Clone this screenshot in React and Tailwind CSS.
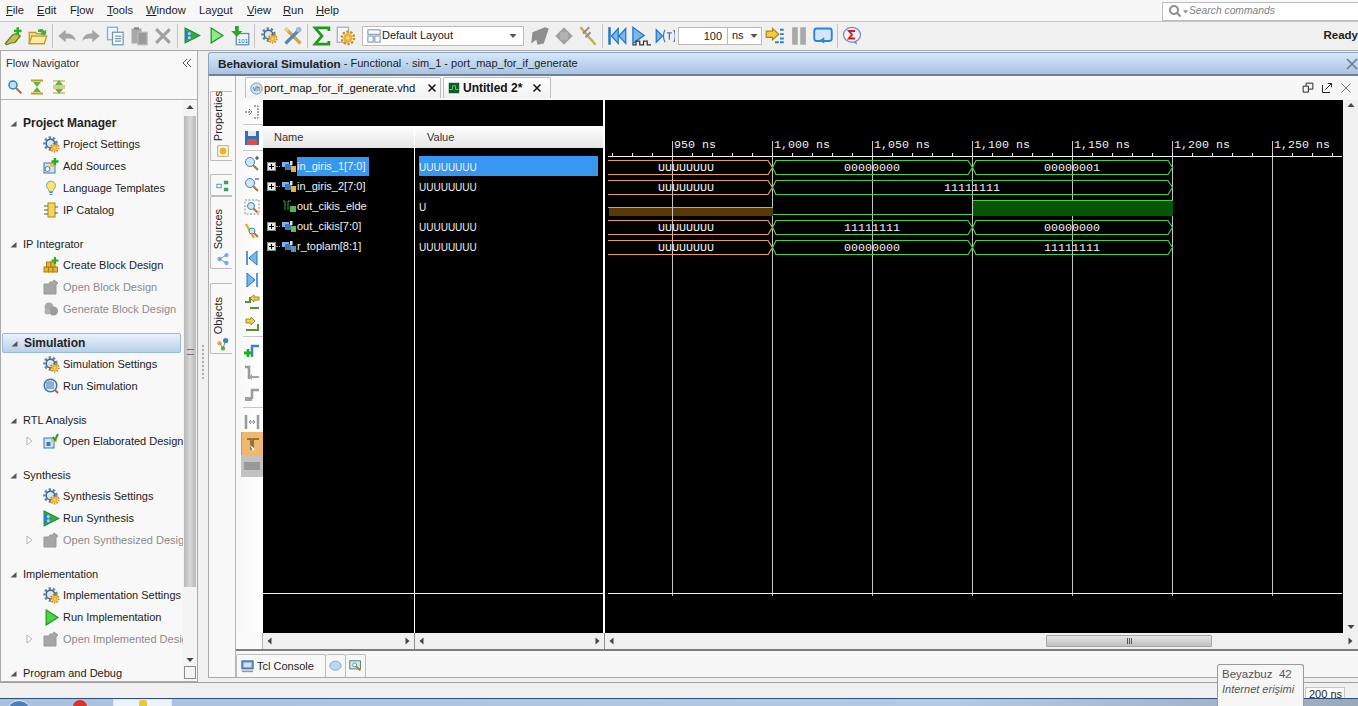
import React from 'react';

// --- icons -----------------------------------------------------------------
const Ic = ({ children, s = 16, className = '' }) => (
  <svg width={s} height={s} viewBox="0 0 16 16" className={`shrink-0 ${className}`}>{children}</svg>
);

const Gear = () => (
  <Ic s={17}>
    <circle cx="7" cy="7" r="5.6" fill="none" stroke="#5b86ad" strokeWidth="2.4" strokeDasharray="2.2 1.8" />
    <circle cx="7" cy="7" r="4" fill="#dbe6f0" stroke="#41688c" strokeWidth="1.4" />
    <circle cx="11" cy="11" r="3.8" fill="none" stroke="#c98a12" strokeWidth="1.6" strokeDasharray="1.5 1.1" />
    <circle cx="11" cy="11" r="2.9" fill="#f3b12d" />
    <circle cx="11" cy="11" r="1" fill="#fbe7a8" />
  </Ic>
);
const AddSources = () => (
  <Ic>
    <rect x="1" y="5" width="11" height="10" fill="#cfe3f5" stroke="#3c7ab0" />
    <circle cx="4.5" cy="11" r="2.5" fill="#fff" stroke="#3c7ab0" />
    <rect x="7" y="6" width="4" height="3" fill="#f0c040" />
    <path d="M12 0v7M8.5 3.5h7" stroke="#22b022" strokeWidth="2.4" />
  </Ic>
);
const Bulb = () => (
  <Ic>
    <path d="M8 1a4.6 4.6 0 0 0-3 8c.8.8 1 1.5 1 2.5h4c0-1 .2-1.7 1-2.5a4.6 4.6 0 0 0-3-8z" fill="#fbe56a" stroke="#6fa8d8" />
    <path d="M6.2 12.5h3.6M6.6 14.3h2.8" stroke="#5b8fc0" strokeWidth="1.2" />
  </Ic>
);
const Chip = () => (
  <Ic>
    <rect x="5" y="1" width="7" height="14" fill="#f5d65a" stroke="#a98a18" />
    <path d="M1 4h4M1 8h4M1 12h4M12 5h3M12 11h3" stroke="#55595e" />
  </Ic>
);
const Blocks = () => (
  <Ic>
    <rect x="1" y="10" width="4.5" height="5" fill="#e6b52e" stroke="#a87f12" />
    <rect x="5.5" y="10" width="4.5" height="5" fill="#e6b52e" stroke="#a87f12" />
    <rect x="10" y="10" width="4.5" height="5" fill="#e6b52e" stroke="#a87f12" />
    <rect x="3.5" y="5" width="4.5" height="5" fill="#e6b52e" stroke="#a87f12" />
    <rect x="8" y="5" width="4" height="5" fill="#e6b52e" stroke="#a87f12" />
    <path d="M12 0v7M8.5 3.5h7" stroke="#22b022" strokeWidth="2.2" />
  </Ic>
);
const OpenGray = () => (
  <Ic>
    <path d="M1 5h5l1-2h3l1-2 4 3-2 2v9H1z" fill="#a6a6a6" stroke="#989898" />
  </Ic>
);
const GenGray = () => (
  <Ic>
    <circle cx="6" cy="6" r="4.5" fill="#a8a8a8" />
    <circle cx="10.5" cy="10" r="4.5" fill="#9c9c9c" />
    <circle cx="4.5" cy="10.5" r="3" fill="#b0b0b0" />
  </Ic>
);
const RunSim = () => (
  <Ic>
    <circle cx="7.5" cy="7.5" r="6.3" fill="#dce8f4" stroke="#3f76ad" strokeWidth="1.5" />
    <path d="M4 4v7M6 3v8M8 3v8M10 4v7" stroke="#3f76ad" />
    <path d="M12 12l3 3" stroke="#c85a30" strokeWidth="2" />
  </Ic>
);
const Elaborated = () => (
  <Ic>
    <rect x="1" y="5" width="10" height="10" fill="#cfe3f5" stroke="#3c7ab0" />
    <rect x="3.5" y="9" width="4" height="4" fill="#3c7ab0" />
    <path d="M8 6h6v3H8z" fill="#f0c040" />
    <path d="M10 4l2 3 3-6" fill="none" stroke="#22a022" strokeWidth="2" />
  </Ic>
);
const RunSynth = () => (
  <Ic s={17}>
    <path d="M1 1l14 7-14 7z" fill="#35ad35" stroke="#1d8a3d" />
    <path d="M1 3l7 5-7 5z" fill="#2c7cc8" />
    <circle cx="5" cy="6.3" r="1.5" fill="#9fd0f5" />
    <circle cx="5" cy="10" r="1.5" fill="#9fd0f5" />
  </Ic>
);
const Play = ({ solid }) => (
  <Ic s={17}>
    <path d="M3 1l11 7-11 7z" fill={solid ? '#49d449' : '#8ee88e'} stroke="#1c9c1c" strokeWidth="1.2" />
  </Ic>
);
const Triangle = ({ open }) =>
  open ? (
    <svg width="8" height="10" viewBox="0 0 8 10" className="shrink-0">
      <path d="M1 1l5 4-5 4z" fill="#fff" stroke="#b5b5b5" />
    </svg>
  ) : (
    <svg width="7" height="7" viewBox="0 0 7 7" className="shrink-0">
      <path d="M6.5 1v5.5H0.5z" fill="#555" />
    </svg>
  );
const Arrow = ({ dir = 'down', color = '#444' }) => {
  const d = {
    up: 'M0.5 5L4 1l3.5 4z',
    down: 'M0.5 2L4 6l3.5-4z',
    left: 'M5.5 0.5L1.5 4l4 3.5z',
    right: 'M2.5 0.5L6.5 4l-4 3.5z',
  }[dir];
  return (
    <svg width="8" height="8" viewBox="0 0 8 8" className="shrink-0">
      <path d={d} fill={color} />
    </svg>
  );
};

// toolbar icons
const TB = {
  wand: (
    <Ic s={20}>
      <path d="M1 14l6-7c2-1 4-1 6 1l-4 5c-3 0-5 1-7 2z" fill="#b9c24a" stroke="#6f7a22" />
      <path d="M11 1v6M8 4h6" stroke="#22b022" strokeWidth="2" />
    </Ic>
  ),
  folder: (
    <Ic s={20}>
      <path d="M1 5h5l1 1h6v8H1z" fill="#f2d675" stroke="#b99a2c" />
      <path d="M1 14l2-6h12l-2 6z" fill="#fbe9a6" stroke="#b99a2c" />
      <path d="M8 3c2-1 4-1 5 1l1.5-1v4H10l1.5-1c-.8-1.3-2-1.6-3.5-1z" fill="#3fb03f" />
    </Ic>
  ),
  undo: (
    <Ic s={20}>
      <path d="M1 8l6-5v3c4 0 7 1 8 6-2-2-4-2-8-2v3z" fill="#a4a4a4" />
    </Ic>
  ),
  redo: (
    <Ic s={20}>
      <path d="M15 8l-6-5v3c-4 0-7 1-8 6 2-2 4-2 8-2v3z" fill="#a4a4a4" />
    </Ic>
  ),
  copy: (
    <Ic s={20}>
      <rect x="2" y="1" width="8" height="10" fill="#eef4fb" stroke="#8aa9c8" />
      <rect x="6" y="5" width="8.5" height="10" fill="#fff" stroke="#6f94bb" />
      <path d="M8 8h5M8 10h5M8 12h5" stroke="#6f94bb" />
    </Ic>
  ),
  paste: (
    <Ic s={20}>
      <rect x="2" y="2" width="8" height="12" fill="#a9a9a9" />
      <rect x="7" y="5" width="7.5" height="10" fill="#9a9a9a" stroke="#b8b8b8" />
      <rect x="4" y="1" width="4" height="2" fill="#888" />
    </Ic>
  ),
  x: (
    <Ic s={20}>
      <path d="M2.5 2.5l11 11M13.5 2.5l-11 11" stroke="#a0a0a0" strokeWidth="2.4" />
    </Ic>
  ),
  download: (
    <Ic s={20}>
      <rect x="5" y="6" width="10" height="9" fill="#eef4fb" stroke="#5c8cb8" />
      <path d="M4 0v4H1l4.5 4.5L10 4H7V0z" fill="#2ea52e" />
      <text x="6.2" y="13.5" fontSize="5" fill="#2a6aa8" fontFamily="'Liberation Sans',sans-serif">101</text>
    </Ic>
  ),
  tools: (
    <Ic s={20}>
      <path d="M2 2l12 12" stroke="#d9a43a" strokeWidth="2.6" />
      <path d="M14 2L2 14" stroke="#5a86b3" strokeWidth="2.6" />
      <circle cx="12.5" cy="3" r="2.2" fill="#9dbbd8" />
      <circle cx="3" cy="3" r="1.6" fill="#e6d27a" />
    </Ic>
  ),
  sigma: (
    <Ic s={20}>
      <path d="M13.5 4V1.5H2.5L8 8l-5.500 6.500h11V12" fill="none" stroke="#1f9c1f" strokeWidth="2.2" />
    </Ic>
  ),
  docGear: (
    <Ic s={20}>
      <rect x="1" y="1" width="9" height="12" fill="#f4f6f9" stroke="#9bb0c6" />
      <circle cx="9.5" cy="9.5" r="5" fill="none" stroke="#c98a12" strokeWidth="1.8" strokeDasharray="1.8 1.3" />
      <circle cx="9.5" cy="9.5" r="3.8" fill="#f3b12d" />
      <circle cx="9.5" cy="9.5" r="1.3" fill="#fbe7a8" />
    </Ic>
  ),
  grayLeaf: (
    <Ic s={20}>
      <path d="M2 5l10-4 3 1-4 12-5 1-1-4-4 3z" fill="#8f8f8f" />
    </Ic>
  ),
  grayDiamond: (
    <Ic s={20}>
      <path d="M8 1l7 7-7 7-7-7z" fill="#a2a2a2" />
      <path d="M5 5h6v6H5z" fill="#b4b4b4" />
    </Ic>
  ),
  pen: (
    <Ic s={20}>
      <path d="M2 1l12 14" stroke="#c5ac5a" strokeWidth="2" />
      <path d="M4 6l5-5M6 9l4-4" stroke="#8d8d8d" strokeWidth="1.5" />
    </Ic>
  ),
  rewind: (
    <Ic s={20}>
      <path d="M2 1v14" stroke="#2376cc" strokeWidth="2" />
      <path d="M9 2L3.500 8 9 14zM15 2L9.500 8l5.500 6z" fill="#7cb6ec" stroke="#2376cc" />
    </Ic>
  ),
  playPulse: (
    <Ic s={20}>
      <path d="M1.5 1l9 6.5-9 6.500z" fill="#7cb6ec" stroke="#2376cc" />
      <path d="M1 15h3v-3h3v3h3v-3h3v3h3" fill="none" stroke="#333" />
    </Ic>
  ),
  playT: (
    <Ic s={20}>
      <path d="M1 3l5 5-5 5z" fill="#7cb6ec" stroke="#2376cc" />
      <path d="M8 3c-1.5 3-1.5 7 0 10M15 3c1.5 3 1.500 7 0 10M9.500 5.500h4M11.500 5.500v5.500" fill="none" stroke="#4d7ca8" />
    </Ic>
  ),
  yellowArrow: (
    <Ic s={20}>
      <path d="M1 4h5V2l5 4.500L6 11V9H1z" fill="#f4cc3a" stroke="#a98a18" />
      <path d="M12 3h3M12 6.500h3M12 10h3M12 13h3M8 13h3" stroke="#2f7fd0" strokeWidth="1.5" />
    </Ic>
  ),
  pause: (
    <Ic s={20}>
      <rect x="2.5" y="1" width="4.5" height="14" fill="#a8a8a8" />
      <rect x="9" y="1" width="4.5" height="14" fill="#a8a8a8" />
    </Ic>
  ),
  relaunch: (
    <Ic s={20}>
      <rect x="1" y="2" width="14" height="10" rx="2" fill="#cfe6fb" stroke="#2c84d8" strokeWidth="1.5" />
      <path d="M9 9v5l-4-2.500z" fill="#2c84d8" />
    </Ic>
  ),
  redSigma: (
    <Ic s={20}>
      <ellipse cx="8" cy="7" rx="6.800" ry="6" fill="#f6f2f4" stroke="#7f8fb8" />
      <path d="M10.500 4H5.500L8 7l-2.500 3h5" fill="none" stroke="#c81e28" strokeWidth="1.5" />
      <path d="M9 13l3 2-.5-3z" fill="#7f8fb8" />
    </Ic>
  ),
  layout: (
    <Ic s={14}>
      <rect x="1" y="1" width="14" height="5" fill="#fff" stroke="#5c7ea6" />
      <rect x="1" y="8" width="6" height="7" fill="#fff" stroke="#5c7ea6" />
      <rect x="9" y="8" width="6" height="7" fill="#fff" stroke="#5c7ea6" />
    </Ic>
  ),
};

// --- small shared parts ----------------------------------------------------
const Slot = ({ children }) => <div className="w-[24px] h-[24px] flex items-center justify-center">{children}</div>;
const Sep = () => (
  <div className="w-[5px] h-[24px] flex justify-center">
    <div className="w-[1px] h-full bg-[#c4c4c4]" />
  </div>
);

const MENU = [
  ['', 'F', 'ile', 'w-[31px]'],
  ['', 'E', 'dit', 'w-[33px]'],
  ['F', 'l', 'ow', 'w-[37px]'],
  ['', 'T', 'ools', 'w-[39px]'],
  ['', 'W', 'indow', 'w-[53px]'],
  ['Lay', 'o', 'ut', 'w-[48px]'],
  ['', 'V', 'iew', 'w-[36px]'],
  ['', 'R', 'un', 'w-[33px]'],
  ['', 'H', 'elp', 'w-[40px]'],
];

const MenuBar = () => (
  <div className="h-[22px] flex items-center bg-[#f7f7f7] border-b border-[#c6c6c6] pl-[6px]">
    {MENU.map(([a, u, b, w]) => (
      <div key={a + u} className={`${w} text-[11.2px] text-[#222]`}>
        {a}
        <span className="underline">{u}</span>
        {b}
      </div>
    ))}
    <div className="ml-auto h-[19px] w-[196px] mt-[1px] border border-[#bdbdbd] border-r-0 bg-white flex items-center pl-[5px] gap-[1px]">
      <svg width="14" height="14" viewBox="0 0 14 14">
        <circle cx="6" cy="6" r="4" fill="none" stroke="#8c8c8c" strokeWidth="2" />
        <path d="M9 9l3.500 3.500" stroke="#8c8c8c" strokeWidth="2" />
      </svg>
      <svg width="5" height="5" viewBox="0 0 8 8">
        <path d="M0 2h8L4 7z" fill="#8c8c8c" />
      </svg>
      <span className="text-[10.3px] italic text-[#7f7f7f]">Search commands</span>
    </div>
  </div>
);

const Toolbar = () => (
  <div className="h-[29px] flex items-center bg-[#f0f0f0] border-b border-[#a8a8a8] pl-[2px] pb-[1px]">
    <Slot>{TB.wand}</Slot>
    <Slot>{TB.folder}</Slot>
    <Sep />
    <Slot>{TB.undo}</Slot>
    <Slot>{TB.redo}</Slot>
    <Slot>{TB.copy}</Slot>
    <Slot>{TB.paste}</Slot>
    <Slot>{TB.x}</Slot>
    <Sep />
    <Slot><RunSynth /></Slot>
    <Slot><Play /></Slot>
    <Slot>{TB.download}</Slot>
    <Sep />
    <Slot><Gear /></Slot>
    <Slot>{TB.tools}</Slot>
    <Sep />
    <Slot>{TB.sigma}</Slot>
    <Slot>{TB.docGear}</Slot>
    <div className="ml-[4px] w-[162px] h-[20px] bg-white border border-[#bcbcbc] flex items-center pl-[4px] gap-[1px]">
      {TB.layout}
      <span className="text-[11px] text-[#222] flex-1">Default Layout</span>
      <div className="mr-[6px]"><Arrow color="#555" /></div>
    </div>
    <div className="w-[4px]" />
    <Slot>{TB.grayLeaf}</Slot>
    <Slot>{TB.grayDiamond}</Slot>
    <Slot>{TB.pen}</Slot>
    <Sep />
    <Slot>{TB.rewind}</Slot>
    <Slot>{TB.playPulse}</Slot>
    <Slot>{TB.playT}</Slot>
    <div className="ml-[1px] w-[50px] h-[18px] bg-white border border-[#bcbcbc] text-[11px] text-right pr-[5px] leading-[16px] text-[#222]">100</div>
    <div className="w-[34px] h-[18px] bg-white border border-l-0 border-[#bcbcbc] flex items-center justify-between pl-[4px] pr-[3px] text-[11px] text-[#222]">
      ns
      <Arrow color="#555" />
    </div>
    <div className="w-[1px]" />
    <Slot>{TB.yellowArrow}</Slot>
    <Slot>{TB.pause}</Slot>
    <Slot>{TB.relaunch}</Slot>
    <Sep />
    <Slot>{TB.redSigma}</Slot>
    <div className="ml-auto font-bold text-[11.5px] text-[#222]">Ready</div>
  </div>
);

// --- flow navigator --------------------------------------------------------
const NAV = [
  {
    title: 'Project Manager',
    bold: true,
    items: [
      { label: 'Project Settings', icon: <Gear /> },
      { label: 'Add Sources', icon: <AddSources /> },
      { label: 'Language Templates', icon: <Bulb /> },
      { label: 'IP Catalog', icon: <Chip /> },
    ],
  },
  {
    title: 'IP Integrator',
    items: [
      { label: 'Create Block Design', icon: <Blocks /> },
      { label: 'Open Block Design', icon: <OpenGray />, off: true },
      { label: 'Generate Block Design', icon: <GenGray />, off: true },
    ],
  },
  {
    title: 'Simulation',
    bold: true,
    active: true,
    items: [
      { label: 'Simulation Settings', icon: <Gear /> },
      { label: 'Run Simulation', icon: <RunSim /> },
    ],
  },
  {
    title: 'RTL Analysis',
    items: [{ label: 'Open Elaborated Design', icon: <Elaborated />, expand: true }],
  },
  {
    title: 'Synthesis',
    items: [
      { label: 'Synthesis Settings', icon: <Gear /> },
      { label: 'Run Synthesis', icon: <RunSynth /> },
      { label: 'Open Synthesized Design', icon: <OpenGray />, off: true, expand: true },
    ],
  },
  {
    title: 'Implementation',
    items: [
      { label: 'Implementation Settings', icon: <Gear /> },
      { label: 'Run Implementation', icon: <Play solid /> },
      { label: 'Open Implemented Design', icon: <OpenGray />, off: true, expand: true },
    ],
  },
  { title: 'Program and Debug', items: [] },
];

const NavSection = ({ section }) => (
  <div className="mb-[13px]">
    <div
      className={`h-[20px] flex items-center pl-[8px] ml-[1px] w-[179px] rounded-[2px] text-[#222] ${
        section.active ? 'bg-gradient-to-b from-[#eaf2fb] to-[#b9d0ea] border border-[#9db8d6]' : ''
      } ${section.bold ? 'font-bold text-[12px]' : 'text-[11px]'}`}
    >
      <Triangle />
      <span className="ml-[6px] whitespace-nowrap">{section.title}</span>
    </div>
    {section.items.map((item) => (
      <div key={item.label} className="h-[22px] flex items-center whitespace-nowrap">
        <div className="w-[42px] pl-[25px] shrink-0">{item.expand && <Triangle open />}</div>
        <div className="w-[16px] flex justify-center shrink-0">{item.icon}</div>
        <span className={`ml-[4px] shrink-0 text-[11px] ${item.off ? 'text-[#8b8b8b]' : 'text-[#222]'}`}>{item.label}</span>
      </div>
    ))}
  </div>
);

const FlowNavigator = () => (
  <div className="w-[198px] h-full flex flex-col bg-[#f8f8f8] border-l border-r border-b border-[#ababab]">
    <div className="h-[25px] pb-[1px] flex items-center justify-between pl-[5px] pr-[5px] text-[11px] text-[#333]">
      Flow Navigator
      <svg width="10" height="10" viewBox="0 0 10 10">
        <path d="M5 1L1 5l4 4M9 1L5 5l4 4" fill="none" stroke="#555" />
      </svg>
    </div>
    <div className="h-[24px] pb-[2px] flex items-center gap-[6px] pl-[6px] border-b border-[#b5b5b5]">
      <Ic>
        <circle cx="6" cy="6" r="4" fill="#bfe0fa" stroke="#2a80cc" strokeWidth="1.5" />
        <path d="M9 9l5.500 5.500" stroke="#c0663a" strokeWidth="2" />
      </Ic>
      <Ic>
        <path d="M2 1.500h12M2 14.500h12" stroke="#c49a22" strokeWidth="2" />
        <path d="M4 3h8L8 8zM4 13h8L8 8z" fill="#58bb3a" />
      </Ic>
      <Ic>
        <path d="M2 2h12M2 14h12M2 7h12M2 9h12" stroke="#c49a22" />
        <path d="M4 6l4-5 4 5zM4 10l4 5 4-5z" fill="#58bb3a" />
      </Ic>
    </div>
    <div className="flex-1 flex min-h-0">
      <div className="w-[182px] pt-[13px] overflow-hidden">
        {NAV.map((s) => (
          <NavSection key={s.title} section={s} />
        ))}
      </div>
      <div className="w-[14px] flex flex-col items-center bg-[#f4f4f4]">
        <div className="h-[16px] flex items-center"><Arrow dir="up" /></div>
        <div className="w-[12px] h-[471px] bg-gradient-to-r from-[#b8b8b8] via-[#d8d8d8] to-[#b8b8b8] flex items-center justify-center">
          <div className="w-[7px] h-[6px] border-y border-[#777]" />
        </div>
        <div className="mt-auto h-[12px] flex items-center"><Arrow dir="down" /></div>
        <div className="w-[12px] h-[13px] border border-[#8b8b8b] mb-[2px]" />
      </div>
    </div>
  </div>
);

// --- waveform --------------------------------------------------------------
const WAVE_ROWS = [
  { y: 160, segs: [[772, 972, '00000000'], [972, 1172, '00000001']] },
  { y: 180, segs: [[772, 1172, '11111111']] },
  { y: 220, segs: [[772, 972, '11111111'], [972, 1172, '00000000']] },
  { y: 240, segs: [[772, 972, '00000000'], [972, 1172, '11111111']] },
];
const MAJOR = [672, 772, 872, 972, 1072, 1172, 1272];
const TIME = [
  [674, '950 ns'],
  [774, '1,000 ns'],
  [874, '1,050 ns'],
  [974, '1,100 ns'],
  [1074, '1,150 ns'],
  [1174, '1,200 ns'],
  [1274, '1,250 ns'],
];
const minorTicks = [];
for (let x = 612; x < 1342; x += 20) minorTicks.push(x);
const ORANGE = '#e8a24e';
const GREEN = '#42d042';
const monoFont = "'Liberation Mono',monospace";

const Bus = ({ x1, x2, y, color, open }) => {
  const top = y + 0.5;
  const bot = y + 14.5;
  const mid = y + 7.5;
  const d = open
    ? `M${x1} ${top}L${x2 - 4} ${top}L${x2 + 0.5} ${mid}L${x2 - 4} ${bot}L${x1} ${bot}`
    : `M${x1 + 0.5} ${mid}L${x1 + 4} ${top}L${x2 - 4} ${top}L${x2 + 0.5} ${mid}L${x2 - 4} ${bot}L${x1 + 4} ${bot}Z`;
  return <path d={d} fill="none" stroke={color} strokeWidth="1.2" />;
};

const Wave = () => (
  <svg width="738" height="533" viewBox="605 100 738 533" className="block bg-black shrink-0">
    {MAJOR.map((x) => (
      <line key={x} x1={x + 0.5} y1="141" x2={x + 0.5} y2="596" stroke="#c6c6c6" />
    ))}
    <line x1="608" y1="156.5" x2="1342" y2="156.5" stroke="#f0f0f0" />
    {minorTicks.map((x) => (
      <line key={x} x1={x + 0.5} y1="153" x2={x + 0.5} y2="156" stroke="#f0f0f0" />
    ))}
    <line x1="608" y1="593.5" x2="1342" y2="593.5" stroke="#f0f0f0" />
    {TIME.map(([x, t]) => (
      <text key={t} x={x} y="148" fontSize="11.67" fill="#f0f0f0" fontFamily={monoFont}>{t}</text>
    ))}

    {WAVE_ROWS.map((row) => (
      <g key={row.y}>
        <Bus x1={608} x2={772} y={row.y} color={ORANGE} open />
        <text x="686" y={row.y + 11} fontSize="11.67" fill="#f2f2f2" textAnchor="middle" fontFamily={monoFont}>UUUUUUUU</text>
        {row.segs.map(([a, b, v]) => (
          <g key={a}>
            <Bus x1={a} x2={b} y={row.y} color={GREEN} />
            <text x={(a + b) / 2} y={row.y + 11} fontSize="11.67" fill="#f2f2f2" textAnchor="middle" fontFamily={monoFont}>{v}</text>
          </g>
        ))}
      </g>
    ))}

    {/* out_cikis_elde: U, then 0, then 1 */}
    <rect x="609" y="207" width="164" height="9" fill="#5a3806" />
    <line x1="608" y1="207.5" x2="773" y2="207.5" stroke={ORANGE} strokeWidth="1.2" />
    <line x1="672.5" y1="207" x2="672.5" y2="216" stroke="#c6c6c6" />
    <line x1="773" y1="214.5" x2="972" y2="214.5" stroke={GREEN} strokeWidth="1.2" />
    <rect x="973" y="200" width="200" height="16" fill="#055705" />
    <line x1="973" y1="200.5" x2="1173" y2="200.5" stroke={GREEN} strokeWidth="1.2" />
  </svg>
);

// --- wave window -----------------------------------------------------------
const SIGNALS = [
  { name: 'in_giris_1[7:0]', value: 'UUUUUUUU', bus: true, tone: '#e8b23c', selected: true },
  { name: 'in_giris_2[7:0]', value: 'UUUUUUUU', bus: true, tone: '#e8b23c' },
  { name: 'out_cikis_elde', value: 'U', tone: '#4db84d' },
  { name: 'out_cikis[7:0]', value: 'UUUUUUUU', bus: true, tone: '#5cc15c' },
  { name: 'r_toplam[8:1]', value: 'UUUUUUUU', bus: true, tone: '#5a8fc8' },
];

const SignalIcon = ({ bus, tone }) =>
  bus ? (
    <svg width="14" height="12" viewBox="0 0 14 12" className="shrink-0">
      <rect x="0" y="2" width="7" height="5" fill="#7fb2e0" />
      <rect x="3" y="4" width="7" height="6" fill="#3e78b5" />
      <rect x="8" y="1" width="2.5" height="4" fill="#cfe0f0" />
      <rect x="9" y="6" width="5" height="6" fill={tone} />
    </svg>
  ) : (
    <svg width="14" height="12" viewBox="0 0 14 12" className="shrink-0">
      <path d="M1 1h2v9M6 1v9M6 1h3" fill="none" stroke="#4d9a4d" />
      <rect x="8" y="6" width="6" height="6" fill={tone} />
    </svg>
  );

const ExpandBox = () => (
  <div className="w-[9px] h-[9px] bg-[#e8e8e8] border border-[#8a8a8a] flex items-center justify-center relative">
    <div className="w-[5px] h-[1px] bg-black" />
    <div className="absolute w-[1px] h-[5px] bg-black" />
  </div>
);

const HeaderCell = ({ children, pl }) => (
  <div className={`h-[22px] bg-gradient-to-b from-[#ffffff] to-[#e4e4e4] flex items-center text-[11px] text-[#333] ${pl}`}>{children}</div>
);

const ScrollEnds = () => (
  <div className="h-[16px] flex items-center justify-between px-[3px] bg-[#f0f0f0] border-r border-[#8f8f8f]">
    <Arrow dir="left" />
    <Arrow dir="right" />
  </div>
);

const NameColumn = () => (
  <div className="w-[152px] flex flex-col shrink-0">
    <div className="h-[26px] bg-black" />
    <div className="border-r border-white">
      <HeaderCell pl="pl-[11px]">Name</HeaderCell>
    </div>
    <div className="h-[445px] bg-black border-r border-white pt-[8px]">
      {SIGNALS.map((s) => (
        <div key={s.name} className="h-[20px] flex items-center text-[11px] text-[#f2f2f2]">
          <div className="w-[13px] pl-[4px] flex">{s.bus && <ExpandBox />}</div>
          <div className="w-[6px] pt-[1px]">{s.bus && <div className="w-[4px] border-t border-dotted border-[#999]" />}</div>
          <SignalIcon bus={s.bus} tone={s.tone} />
          <span className={`ml-[1px] h-[19px] leading-[19px] pr-[3px] ${s.selected ? 'bg-[#3797f0] text-[#e8f3ff]' : ''}`}>{s.name}</span>
        </div>
      ))}
    </div>
    <div className="h-[1px] bg-[#f0f0f0]" />
    <div className="h-[39px] bg-black border-r border-white" />
    <ScrollEnds />
  </div>
);

const ValueColumn = () => (
  <div className="w-[190px] flex flex-col shrink-0">
    <div className="h-[26px] bg-black border-r-2 border-white" />
    <div className="border-r-2 border-white">
      <HeaderCell pl="pl-[12px]">Value</HeaderCell>
    </div>
    <div className="h-[445px] bg-black border-r-2 border-white pt-[8px] pl-[4px] pr-[5px]">
      {SIGNALS.map((s) => (
        <div key={s.name} className={`h-[20px] leading-[23px] text-[10px] text-[#f2f2f2] ${s.selected ? 'bg-[#3797f0]' : ''}`}>{s.value}</div>
      ))}
    </div>
    <div className="h-[1px] bg-[#f0f0f0]" />
    <div className="h-[39px] bg-black border-r-2 border-white" />
    <ScrollEnds />
  </div>
);

const WaveColumn = () => (
  <div className="flex-1 flex flex-col min-w-0">
    <div className="flex h-[533px]">
      <Wave />
      <div className="flex-1 bg-[#f0f0f0] flex flex-col items-center justify-between py-[2px]">
        <Arrow dir="up" />
        <Arrow dir="down" />
      </div>
    </div>
    <div className="h-[16px] flex items-center bg-[#f0f0f0] pl-[3px] pr-[4px]">
      <Arrow dir="left" />
      <div className="ml-[430px] w-[166px] h-[12px] rounded-[1px] bg-gradient-to-b from-[#e6e6e6] to-[#c0c0c0] border border-[#a6a6a6] flex items-center justify-center gap-[1px]">
        <div className="w-[1px] h-[6px] bg-[#555]" />
        <div className="w-[1px] h-[6px] bg-[#555]" />
        <div className="w-[1px] h-[6px] bg-[#555]" />
      </div>
      <div className="ml-auto"><Arrow dir="right" /></div>
    </div>
  </div>
);

const SIDE_ICONS = [
  { y: 'mt-[1px]', icon: <path d="M1 8h6M5 5l3 3-3 3M10 2h4v12h-4" fill="none" stroke="#555" strokeDasharray="2 1" /> },
  { sep: 'mt-[1px]' },
  { y: 'mt-[2px]', icon: <g><rect x="1" y="1" width="14" height="14" fill="#2f6fb5" /><rect x="4" y="1" width="8" height="5" fill="#e8e8e8" /><rect x="3" y="9" width="10" height="6" fill="#d45050" /></g> },
  { sep: 'mt-[1px]' },
  { y: 'mt-[2px]', icon: <g><circle cx="6" cy="6" r="4.5" fill="#cfe6fb" stroke="#3a84cc" /><path d="M9 9l5 5" stroke="#b8702a" strokeWidth="2" /><path d="M11 2h4M13 0v4" stroke="#333" /></g> },
  { y: 'mt-[-1px]', icon: <g><circle cx="6" cy="6" r="4.5" fill="#cfe6fb" stroke="#3a84cc" /><path d="M9 9l5 5" stroke="#b8702a" strokeWidth="2" /><path d="M11 2h4" stroke="#333" /></g> },
  { y: 'mt-0', icon: <g><rect x="1" y="1" width="14" height="14" fill="none" stroke="#888" strokeDasharray="2 1.5" /><circle cx="7" cy="7" r="3.5" fill="#cfe6fb" stroke="#3a84cc" /><path d="M9.500 9.500l4 4" stroke="#b8702a" strokeWidth="2" /></g> },
  { y: 'mt-[2px]', icon: <g><path d="M2 1l8 14" stroke="#e0b030" strokeWidth="2.5" /><circle cx="8" cy="8" r="3" fill="#cfe6fb" stroke="#3a84cc" /><path d="M10 10l4 4" stroke="#b8702a" strokeWidth="2" /></g> },
  { y: 'mt-[5px]', icon: <g><path d="M3 1v14" stroke="#2376cc" strokeWidth="1.5" /><path d="M13 1L5 8l8 7z" fill="#7cb6ec" stroke="#2376cc" /></g> },
  { y: 'mt-0', icon: <g><path d="M3 1l8 7-8 7z" fill="#7cb6ec" stroke="#2376cc" /><path d="M13 1v14" stroke="#2376cc" strokeWidth="1.5" /></g> },
  { y: 'mt-0', icon: <g><path d="M1 8h5V3M6 14h9" fill="none" stroke="#4a9a28" strokeWidth="2" /><path d="M6 4l4-3v2h5v3h-5v2z" fill="#f2cf58" stroke="#a98a18" /></g> },
  { y: 'mt-0', icon: <g><path d="M2 14h12V8" fill="none" stroke="#4a9a28" strokeWidth="2" /><path d="M2 3h5V1l4 4-4 4V7H2z" fill="#f2cf58" stroke="#a98a18" /></g> },
  { sep: 'mt-[1px]' },
  { y: 'mt-[3px]', icon: <g><path d="M8 14V3h7" fill="none" stroke="#3a84cc" strokeWidth="2.5" /><path d="M4 6v8M0 10h8" stroke="#19b319" strokeWidth="2.8" /></g> },
  { y: 'mt-0', icon: <g><path d="M5 14V2H1" fill="none" stroke="#9a9a9a" strokeWidth="2.5" /><path d="M15 11H8V9l-3 3 3 3v-2h7z" fill="#a2a2a2" /></g> },
  { y: 'mt-0', icon: <g><path d="M8 12V3h7" fill="none" stroke="#9a9a9a" strokeWidth="2.5" /><path d="M1 10h7v4H1z" fill="#a2a2a2" /></g> },
  { sep: 'mt-[1px]' },
  { y: 'mt-[3px]', icon: <g><path d="M2 1v14M14 1v14" stroke="#9a9a9a" strokeWidth="2.5" /><path d="M5 8h6M5 8l2-2M5 8l2 2M11 8l-2-2M11 8l-2 2" fill="none" stroke="#8a8a8a" /></g> },
];

const SideToolbar = () => (
  <div className="w-[27px] h-[533px] bg-gradient-to-r from-[#f7f7f7] to-[#ffffff] flex flex-col items-end shrink-0">
    {SIDE_ICONS.map((it, i) =>
      it.sep ? (
        <div key={i} className={`w-[20px] h-[1px] bg-[#c8c8c8] ${it.sep}`} />
      ) : (
        <div key={i} className={`${it.y} h-[22px] w-[22px] flex items-center justify-start pl-[3px]`}>
          <Ic>{it.icon}</Ic>
        </div>
      )
    )}
    <div className="mt-[-1px] w-[22px] h-[23px] bg-[#f0b86e] border-l border-[#d69a4a] flex items-center justify-center">
      <Ic>
        <path d="M2 3h4v10h2V3h6" fill="none" stroke="#7a6020" strokeWidth="1.5" />
        <path d="M5 9l3 6 2-2z" fill="#fff" />
      </Ic>
    </div>
    <div className="w-[22px] h-[22px] bg-[#c2c2c2] flex items-center justify-center">
      <div className="w-[16px] h-[8px] bg-[#999]" />
    </div>
  </div>
);

const VTab = ({ label, h, icon }) => (
  <div className={`${h} w-[22px] ml-[1px] bg-[#f8f8f8] border border-r-0 border-[#bdbdbd] rounded-l-[2px] flex flex-col-reverse items-center justify-start pb-[2px] pl-[3px] gap-[3px]`}>
    <Ic s={14}>{icon}</Ic>
    {label && <span className="[writing-mode:vertical-rl] rotate-180 mr-[9px] text-[11px] text-[#222] leading-none">{label}</span>}
  </div>
);

const EditorTab = ({ w, icon, label, active, gap, labelGap }) => (
  <div className={`${w} h-[21px] border border-b-0 border-[#bdbdbd] rounded-t-[2px] flex items-center pl-[4px] bg-gradient-to-b from-[#ffffff] to-[#f2f2f2]`}>
    {icon}
    <span className={`${labelGap} text-[#111] ${active ? 'font-bold text-[12px]' : 'text-[11.3px]'}`}>{label}</span>
    <svg width="10" height="10" viewBox="0 0 10 10" className={gap}>
      <path d="M1.5 1.5l7 7M8.5 1.5l-7 7" stroke="#111" strokeWidth="1.5" />
    </svg>
  </div>
);

const RightPanel = () => (
  <div className="w-[1150px] h-[627px] flex flex-col">
    {/* view title band */}
    <div className="h-[24px] mt-[1px] bg-gradient-to-b from-[#d6e8fa] to-[#a9c3e2] border border-b-2 border-r-0 border-[#8ea3ba] border-b-[#6d8299] rounded-tl-[3px] flex items-center pl-[9px] text-[#222]">
      <span className="font-bold text-[11.7px]">Behavioral Simulation</span>
      <span className="ml-[3px] text-[11px]">- Functional</span>
      <span className="ml-[4px] text-[11px]">· sim_1 - port_map_for_if_generate</span>
      <svg width="12" height="12" viewBox="0 0 12 12" className="ml-auto">
        <path d="M1 1l10 10M11 1L1 11" stroke="#6a7a8c" strokeWidth="1.5" />
      </svg>
    </div>
    <div className="flex-1 flex min-h-0 border-l border-[#ababab] border-b bg-[#f8f8f8]">
      {/* vertical tabs */}
      <div className="w-[26px] pt-[15px] flex flex-col shrink-0">
        <VTab
          label="Properties"
          h="h-[70px]"
          icon={<g><rect x="2" y="2" width="12" height="12" fill="#fff" stroke="#bca03a" /><circle cx="8" cy="8" r="4" fill="#f3b12d" /></g>}
        />
        <div className="h-[13px]" />
        <VTab
          h="h-[22px]"
          icon={<g fill="#3fa05a"><rect x="1" y="6" width="5" height="4" fill="none" stroke="#4d8ab8" /><rect x="9" y="2" width="5" height="4" /><rect x="9" y="10" width="5" height="4" /></g>}
        />
        <VTab
          label="Sources"
          h="h-[73px]"
          icon={<g><circle cx="4" cy="8" r="2.5" fill="#7fb2e0" /><circle cx="12" cy="3.5" r="2.5" fill="#7fb2e0" /><circle cx="12" cy="12.5" r="2.5" fill="#7fb2e0" /><path d="M4 8l8-4.500M4 8l8 4.500" stroke="#5a8fc8" /></g>}
        />
        <div className="h-[14px]" />
        <VTab
          label="Objects"
          h="h-[71px]"
          icon={<g><circle cx="11" cy="4" r="3" fill="#3f83cc" /><circle cx="4" cy="7" r="2.5" fill="#e8b23c" /><circle cx="8" cy="13" r="2.5" fill="#4db84d" /><path d="M4 7l4 6 3-9" fill="none" stroke="#777" /></g>}
        />
      </div>

      <div className="flex-1 flex flex-col min-w-0 border-l border-[#b5b5b5]">
        {/* editor tabs */}
        <div className="h-[24px] flex items-end pl-[9px] pb-[2px] gap-[2px] bg-[#f7f7f7]">
          <EditorTab
            w="w-[196px]"
            label="port_map_for_if_generate.vhd"
            labelGap="ml-[1px]"
            gap="ml-[12px]"
            icon={
              <Ic s={13}>
                <circle cx="8" cy="8" r="7" fill="#cfe0f0" stroke="#5a8fc8" />
                <text x="8" y="11" fontSize="8" textAnchor="middle" fill="#1e4f8a" fontFamily="'Liberation Sans',sans-serif">vh</text>
              </Ic>
            }
          />
          <EditorTab
            w="w-[108px]"
            label="Untitled 2*"
            active
            labelGap="ml-[3px]"
            gap="ml-[10px]"
            icon={
              <Ic s={12}>
                <rect x="1" y="1" width="14" height="14" fill="#0b5d2a" />
                <path d="M2 10h4V5h4v5h4" fill="none" stroke="#7fe07f" />
              </Ic>
            }
          />
          <div className="ml-auto flex items-center gap-[7px] pr-[6px] pb-[4px]">
            <Ic s={12}><path d="M1.5 5.5h7v8h-7zM5.500 5V1.500h9v8H9" fill="none" stroke="#222" strokeWidth="1.3" /></Ic>
            <Ic s={12}><path d="M2 4v10h10M6 10l8-8M9 2h5v5" fill="none" stroke="#222" strokeWidth="1.3" /></Ic>
            <Ic s={12}><path d="M2 2l12 12M14 2L2 14" stroke="#444" /></Ic>
          </div>
        </div>

        {/* wave config window */}
        <div className="h-[551px] flex border-b-2 border-[#7d7d7d] shrink-0">
          <div className="flex flex-col shrink-0">
            <SideToolbar />
            <div className="h-[16px] w-[27px] bg-[#fafafa] border-r border-[#b5b5b5]" />
          </div>
          <NameColumn />
          <ValueColumn />
          <WaveColumn />
        </div>

        {/* console tabs */}
        <div className="flex-1 flex items-end bg-[#f7f7f7]">
          <div className="w-[90px] h-[23px] border border-b-0 border-[#bdbdbd] rounded-t-[2px] flex items-center pl-[4px] bg-[#f8f8f8]">
            <Ic s={13}>
              <rect x="1" y="1" width="14" height="10" fill="#5c8fc4" stroke="#3a6a9c" />
              <rect x="3" y="3" width="10" height="6" fill="#cfe0f0" />
              <path d="M1 13h14v2H1z" fill="#999" />
            </Ic>
            <span className="ml-[3px] text-[11px] text-[#222]">Tcl Console</span>
          </div>
          <div className="w-[20px] h-[23px] border border-b-0 border-l-0 border-[#bdbdbd] rounded-t-[2px] flex items-center justify-center">
            <Ic s={13}><ellipse cx="8" cy="7" rx="7" ry="5.5" fill="#b8d8f5" stroke="#6a9ccc" /></Ic>
          </div>
          <div className="w-[20px] h-[23px] border border-b-0 border-l-0 border-[#bdbdbd] rounded-t-[2px] flex items-center justify-center">
            <Ic s={13}>
              <rect x="1" y="1" width="13" height="10" fill="#d7ecd7" stroke="#3a6a5c" />
              <path d="M8 7l6 6" stroke="#b8702a" strokeWidth="2" />
              <circle cx="7" cy="6" r="2.5" fill="#fff" stroke="#3a84cc" />
            </Ic>
          </div>
        </div>
      </div>
    </div>
  </div>
);

const Splitter = () => (
  <div className="w-[10px] h-[627px] flex justify-center pt-[294px]">
    <div className="h-[34px] w-[2px] border-l-2 border-dotted border-[#b0b0b0]" />
  </div>
);

const StatusBar = () => (
  <div className="h-[16px] bg-[#f0f0f0] border-t border-[#a0a0a0] flex items-end justify-end pr-[13px]">
    <div className="h-[11px] w-[40px] bg-white border border-b-0 border-[#c6c6c6] text-[11px] leading-[13px] pl-[3px] text-[#222] overflow-hidden">200 ns</div>
  </div>
);

const Taskbar = () => (
  <div className="h-[8px] border-t border-[#304f7a] bg-gradient-to-r from-[#a9c1df] via-[#b4c9e2] via-70% to-[#9aa9ba] flex items-start overflow-hidden pl-[6px]">
    <div className="w-[26px] h-[26px] rounded-full border border-[#e8eef6] bg-[#4d7fb8] shrink-0 mt-[1px]" />
    <div className="w-[14px] h-[14px] ml-[41px] rounded-full bg-[#d8352a] shrink-0 mt-[1px]" />
    <div className="w-[59px] h-[8px] ml-[26px] bg-[#eef3f9] border border-b-0 border-[#dfe8f2] flex justify-center shrink-0">
      <div className="w-[8px] h-[8px] bg-[#e5c940] rounded-t-[2px]" />
    </div>
  </div>
);

export default function App() {
  return (
    <div className="w-[1358px] h-[706px] overflow-hidden flex flex-col relative bg-[#f0f0f0] font-['Liberation_Sans',sans-serif]">
      <MenuBar />
      <Toolbar />
      <div className="h-[631px] flex shrink-0">
        <FlowNavigator />
        <Splitter />
        <RightPanel />
      </div>
      <StatusBar />
      <Taskbar />
      {/* tooltip of the system tray */}
      <div className="absolute left-[1217px] top-[664px] w-[87px] h-[42px] bg-[#f6f6f6] border border-[#9a9a9a] border-b-0 rounded-t-[3px] pl-[4px] pt-[2px] text-[11.5px] leading-[15px] text-[#555]">
        <div>Beyazbuz&nbsp;&nbsp;42</div>
        <div className="italic text-[11px]">Internet erişimi</div>
      </div>
    </div>
  );
}
